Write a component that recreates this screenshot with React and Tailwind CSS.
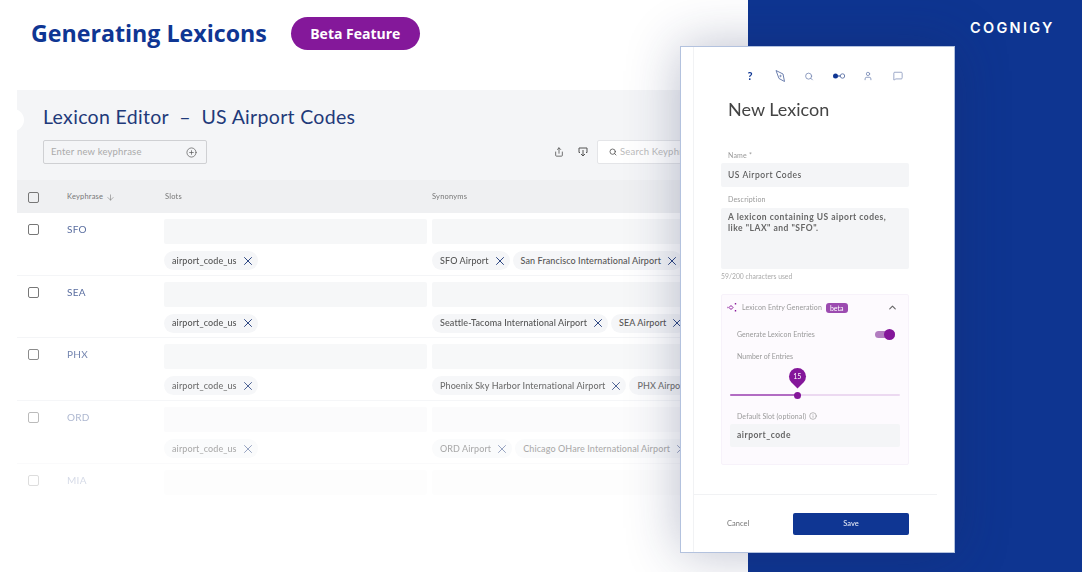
import { ArrowDown, ChevronUp, CirclePlus, Info, MessageSquare, Search, Share, User, X } from 'lucide-react';

const rows = [
  { code: 'SFO', fade: 'border-[#f4f5f7]', synonyms: ['SFO Airport', 'San Francisco International Airport'] },
  { code: 'SEA', fade: 'border-[#f4f5f7]', synonyms: ['Seattle-Tacoma International Airport', 'SEA Airport'] },
  { code: 'PHX', fade: 'border-[#f4f5f7] opacity-85', synonyms: ['Phoenix Sky Harbor International Airport', 'PHX Airport'] },
  { code: 'ORD', fade: 'border-[#f4f5f7] opacity-50', synonyms: ['ORD Airport', 'Chicago OHare International Airport'] },
  { code: 'MIA', fade: 'border-transparent opacity-25', synonyms: [] },
];

function Chip({ label }) {
  return (
    <div className="flex h-[19px] shrink-0 items-center gap-[4px] rounded-full bg-[#f5f6f8] pl-2 pr-[3px] text-[9px] font-medium tracking-[0.1px] whitespace-nowrap text-[#555]">
      {label}
      <X className="h-[14px] w-[14px] text-[#1f3a7a]" strokeWidth={1.6} />
    </div>
  );
}

function Checkbox() {
  return <div className="h-[11px] w-[11px] rounded-[2px] border-[1.5px] border-[#777]" />;
}

function Row({ row }) {
  return (
    <div className={`grid h-[62.7px] grid-cols-[50px_97px_268px_1fr] border-b pt-[6px] ${row.fade}`}>
      <div className="pl-[11px] pt-[5px]">
        <Checkbox />
      </div>
      <div className="pt-[3px] text-[10px] tracking-[0.3px] text-[#5a6ea0]">{row.code}</div>
      <div className="pr-[5px]">
        <div className="h-[25px] rounded-[2px] bg-[#f6f7f8]" />
        {row.code !== 'MIA' && (
          <div className="mt-[7px] flex">
            <Chip label="airport_code_us" />
          </div>
        )}
      </div>
      <div className="overflow-hidden">
        <div className="h-[25px] rounded-[2px] bg-[#f6f7f8]" />
        <div className="mt-[7px] flex gap-[3px]">
          {row.synonyms.map((s) => (
            <Chip key={s} label={s} />
          ))}
        </div>
      </div>
    </div>
  );
}

function Modal() {
  return (
    <div className="absolute left-[680px] top-[46px] h-[507px] w-[275px] border border-[#b3c2de] bg-white shadow-[0_0_50px_rgba(30,40,90,0.3)]">
      <div className="ml-[12px] flex h-full flex-col border-l border-[#f1f2f4] blur-[0.35px]">
        {/* Top icons */}
        <div className="mt-[22px] flex h-[14px] items-center gap-[15.5px] pl-[49px] text-[#6c7fae]">
          <span className="w-[14px] text-center text-[11px] leading-[14px] font-bold text-[#0f3693]">?</span>
          <svg className="h-[14px] w-[14px]" viewBox="0 0 14 14" fill="none" stroke="currentColor" strokeWidth="1">
            <path d="M3 1.5 L10 5 L11.5 12.5 L6 9.5 Z" />
            <circle cx="7.5" cy="7" r="0.7" />
          </svg>
          <Search className="h-[9px] w-[14px]" strokeWidth={2} />
          <svg className="h-[14px] w-[14px]" viewBox="0 0 14 14" fill="none">
            <circle cx="3.5" cy="7" r="2.5" fill="#0f3693" />
            <path d="M6 7 H8" stroke="#0f3693" />
            <circle cx="10.5" cy="7" r="2.2" stroke="#6c7fae" />
          </svg>
          <User className="h-[10px] w-[14px]" strokeWidth={1.8} />
          <MessageSquare className="h-[10px] w-[14px]" strokeWidth={1.6} />
        </div>

        <h2 className="ml-[34px] mt-[14px] text-[18px] leading-[24px] text-[#444]">New Lexicon</h2>

        <div className="ml-[27px] mt-[30px] w-[188px]">
          <div className="pl-[7px] text-[7px] leading-[9px] tracking-[0.2px] text-[#999]">Name *</div>
          <div className="mt-[3px] flex h-[24px] items-center rounded-[2px] bg-[#f4f5f7] px-[7px] text-[8.5px] font-medium tracking-[0.55px] text-[#555]">
            US Airport Codes
          </div>
          <div className="mt-[8px] pl-[7px] text-[7px] leading-[9px] tracking-[0.2px] text-[#999]">Description</div>
          <div className="mt-[4px] h-[61px] rounded-[2px] bg-[#f4f5f7] px-[7px] pt-[4px] text-[8.5px] leading-[11px] font-bold tracking-[0.5px] text-[#666]">
            A lexicon containing US aiport codes,
            <br />
            like "LAX" and "SFO".
          </div>
          <div className="mt-[3px] text-[6.8px] leading-[9px] text-[#aaa]">59/200 characters used</div>

          {/* Generation card */}
          <div className="mt-[13px] h-[171px] rounded-[2px] border border-[#f7f2fa] bg-[#fdfafe] text-[#999]">
            <div className="flex h-[24px] items-center pl-[5px] pr-[10px] pt-[1px]">
              <svg className="mr-[4px] h-[11px] w-[11px]" viewBox="0 0 11 11" fill="none" stroke="#8a1a9b">
                <path d="M4 3.5 L6 5.5 L4 7.5 L2 5.5 Z" />
                <path d="M0.5 5.5 H1.2 M8.5 1 V2.5 M8.5 8 V9.5" strokeWidth="1.4" />
              </svg>
              <span className="text-[7px] tracking-[0.1px]">Lexicon Entry Generation</span>
              <span className="ml-[4px] rounded-[3px] bg-[#9c4bb0] px-[4px] text-[7px] leading-[10px] text-white">beta</span>
              <ChevronUp className="ml-auto h-[11px] w-[11px] text-[#666]" strokeWidth={2.5} />
            </div>
            <div className="mt-[8px] flex h-[14px] items-center justify-between pl-[15px] pr-[13px] text-[7px] tracking-[0.05px]">
              Generate Lexicon Entries
              <div className="flex h-[7px] w-[20px] items-center justify-end rounded-full bg-[#b27cc0]">
                <div className="h-[11px] w-[11px] rounded-full bg-[#84169a]" />
              </div>
            </div>
            <div className="mt-[9px] pl-[15px] text-[7px] leading-[12px]">Number of Entries</div>

            {/* Slider */}
            <div className="relative mx-[8px] mt-[32px] h-[2px] rounded-full bg-[#ecd9f1]">
              <div className="h-full w-[67px] rounded-full bg-[#b26cc3]" />
              <div className="absolute left-[64px] top-[-2.5px] h-[7px] w-[7px] rounded-full bg-[#84169a]" />
              <div className="absolute left-[59px] top-[-26px] flex h-[17px] w-[17px] rotate-45 items-center justify-center rounded-[50%_50%_0_50%] bg-[#84169a]">
                <span className="-rotate-45 text-[7px] text-white">15</span>
              </div>
            </div>

            <div className="mt-[15px] flex items-center gap-[3px] pl-[15px] text-[7px] leading-[10px] tracking-[0.1px]">
              Default Slot (optional)
              <Info className="h-[8px] w-[8px]" />
            </div>
            <div className="mx-[8px] mt-[3px] flex h-[23px] items-center rounded-[2px] bg-[#f4f5f7] px-[7px] text-[8.5px] font-bold tracking-[0.5px] text-[#666]">
              airport_code
            </div>
          </div>
        </div>

        <div className="mt-[29px] flex w-[243px] items-center border-t border-[#f1f2f4] pl-[33px] pt-[18px]">
          <span className="w-[66px] text-[7.5px] text-[#777]">Cancel</span>
          <div className="flex h-[22px] w-[116px] items-center justify-center rounded-[2px] bg-[#0f3693] text-[7.5px] font-medium text-[#dfe5f3]">
            Save
          </div>
        </div>
      </div>
    </div>
  );
}

export default function App() {
  return (
    <div className="relative flex h-[572px] w-[1082px] overflow-hidden bg-white font-['Lato',sans-serif]">
      <div className="w-[748px] overflow-hidden pt-[17px]">
        <div className="flex h-[33px] items-center pl-[31px]">
          <h1 className="font-['Open_Sans',sans-serif] text-[23.2px] font-bold text-[#0f3693]">Generating Lexicons</h1>
          <div className="ml-[24px] flex h-[33px] w-[129px] items-center justify-center rounded-full bg-[#84189a] font-['Open_Sans',sans-serif] text-[14px] font-bold text-white">
            Beta Feature
          </div>
        </div>

        <div className="relative ml-[17px] mt-[40px] blur-[0.3px]">
          <div className="absolute left-[-18px] top-[19px] h-[22px] w-[25px] rounded-full bg-white" />
          <div className="h-[90px] bg-[#f4f5f7] pl-[26px] pt-[14px]">
            <div className="text-[19.5px] leading-[26px] tracking-[0.32px] text-[#1f3a7a]">Lexicon Editor &nbsp;–&nbsp; US Airport Codes</div>
            <div className="mt-[10px] flex items-center">
              <div className="flex h-[24px] w-[164px] items-center justify-between rounded-[2px] border border-[#cfd0d3] pl-[7px] pr-[9px] pt-[1px] text-[9.5px] tracking-[0.2px] text-[#aaa]">
                Enter new keyphrase
                <CirclePlus className="h-[11px] w-[11px] text-[#555]" strokeWidth={1.5} />
              </div>
              <Share className="ml-[347px] h-[10px] w-[10px] text-[#555]" />
              <svg className="ml-[14px] h-[10px] w-[10px] text-[#555]" viewBox="0 0 10 10" fill="none" stroke="currentColor">
                <path d="M2 5.5 H1 V1 H9 V5.5 H8 M5 3 V9 M3 7 L5 9 L7 7" />
              </svg>
              <div className="ml-[9px] flex h-[24px] flex-1 items-center gap-[3px] rounded-l-[2px] border border-[#e4e5e8] bg-white pl-[11px] text-[9.5px] tracking-[0.2px] whitespace-nowrap text-[#bbb]">
                <Search className="h-[8px] w-[8px] text-[#555]" strokeWidth={2.5} />
                Search Keyphrases
              </div>
            </div>
          </div>

          {/* Table head */}
          <div className="grid h-[33px] grid-cols-[50px_98px_267px_1fr] items-center bg-[#eff0f2] pt-[1px] text-[7.5px] tracking-[0.2px] text-[#777]">
            <div className="pl-[11px]">
              <Checkbox />
            </div>
            <div className="flex items-center gap-[3px]">
              Keyphrase
              <ArrowDown className="h-[9px] w-[9px]" strokeWidth={1.5} />
            </div>
            <div>Slots</div>
            <div>Synonyms</div>
          </div>

          {rows.map((row) => (
            <Row key={row.code} row={row} />
          ))}
        </div>
      </div>

      <div className="flex-1 bg-[#0e3591] pl-[222px] pt-[18px] font-['Inter',sans-serif] text-[14.5px] leading-[20px] font-semibold tracking-[2.3px] text-white">
        COGNIGY
      </div>

      <Modal />
    </div>
  );
}
